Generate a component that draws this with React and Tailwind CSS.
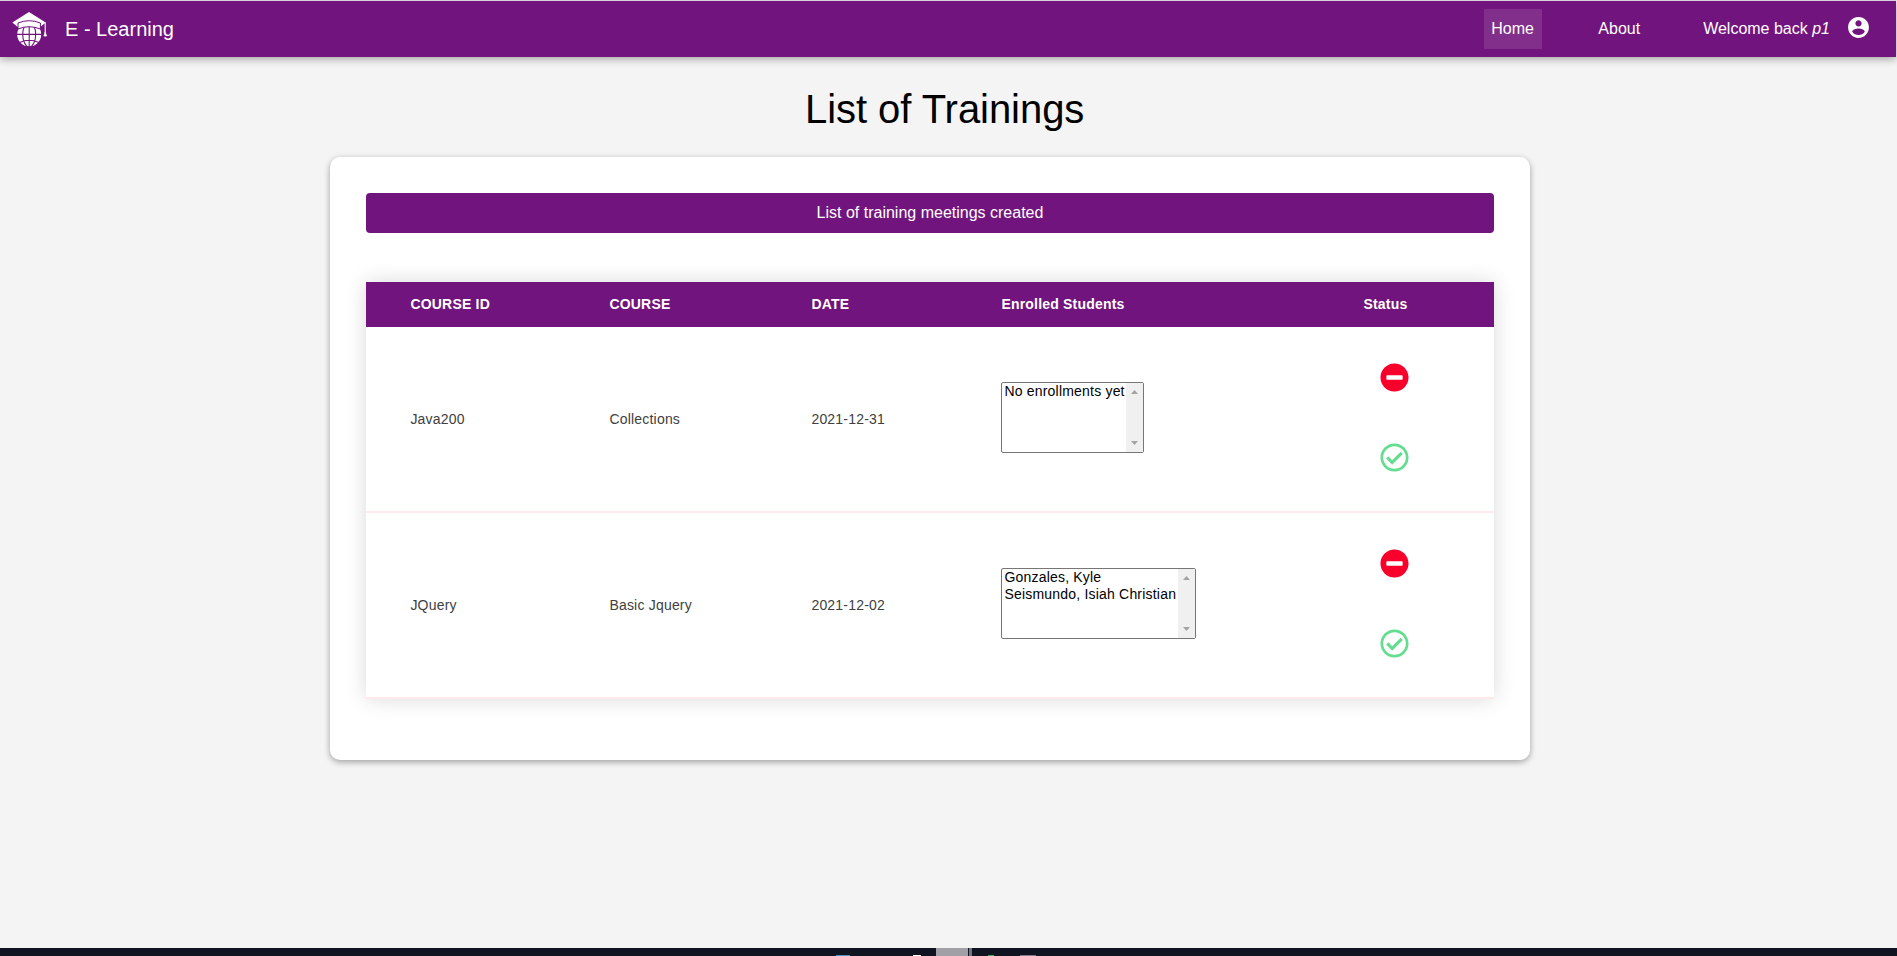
import React from "react";
import { FaMinusCircle, FaRegCheckCircle } from "react-icons/fa";

const columns = "grid grid-cols-[199px_202px_190px_362px_1fr] pl-[44.4px]";

const trainings = [
  { id: "Java200", course: "Collections", date: "2021-12-31", students: ["No enrollments yet"], width: "w-[143px]" },
  { id: "JQuery", course: "Basic Jquery", date: "2021-12-02", students: ["Gonzales, Kyle", "Seismundo, Isiah Christian"], width: "w-[195px]" },
];

function Logo() {
  return (
    <svg className="h-[36px] w-[36px] shrink-0" viewBox="0 0 36 36" fill="none">
      <circle cx="18.2" cy="23.5" r="12" fill="#fff" />
      <g stroke="#71147d" strokeWidth="1.1">
        <path d="M18.2 11v25M5.5 23.4h26M8.5 31.5q9.7-4.5 19.4 0" />
        <ellipse cx="18.2" cy="23.5" rx="6.5" ry="12.5" />
      </g>
      <path d="M18 1L1.3 11.4l5.4 4.6q11.3-6 22.6 0l5.4-4.6z" fill="#fff" />
      <path d="M7 12q11.2-4.6 22.4 0v6q-11.2-4.6-22.4 0z" fill="#fff" stroke="#71147d" />
      <path d="M34.2 11.2v10.5" stroke="#fff" strokeWidth="1.1" />
      <path d="M34.2 21l1.3 4h-2.6z" fill="#fff" stroke="#fff" strokeWidth="0.8" />
    </svg>
  );
}

function AccountIcon() {
  return (
    <svg className="mb-[3px] ml-[16px] h-[25px] w-[25px]" viewBox="0 0 24 24" fill="#fff">
      <path d="M12 2C6.48 2 2 6.48 2 12s4.48 10 10 10 10-4.48 10-10S17.52 2 12 2zm0 3c1.66 0 3 1.34 3 3s-1.34 3-3 3-3-1.34-3-3 1.34-3 3-3zm0 14.2c-2.5 0-4.71-1.28-6-3.22.03-1.99 4-3.08 6-3.08 1.99 0 5.97 1.09 6 3.08-1.29 1.94-3.5 3.22-6 3.22z" />
    </svg>
  );
}

function StudentList({ students, width }) {
  return (
    <div className={`mb-[4px] flex h-[71px] rounded-[2px] border border-[#767676] bg-white ${width}`}>
      <ul className="flex-1 pl-[2px] text-[14px] leading-[17px] tracking-[0.2px] whitespace-nowrap text-black">
        {students.map((name) => (
          <li key={name}>{name}</li>
        ))}
      </ul>
      <div className="flex w-[17px] shrink-0 flex-col items-center justify-between bg-[#f0f0f0] py-[7px]">
        <svg className="h-[4px] w-[7px]" viewBox="0 0 7 4" fill="#a3a3a3"><path d="M0 4L3.5 0 7 4z" /></svg>
        <svg className="h-[4px] w-[7px]" viewBox="0 0 7 4" fill="#a3a3a3"><path d="M0 0h7L3.5 4z" /></svg>
      </div>
    </div>
  );
}

export default function App() {
  return (
    <div className="flex h-[956px] w-full flex-col overflow-hidden bg-[#f4f4f4] font-['Liberation_Sans',Arial,sans-serif] text-black">
      <header className="mr-px flex h-[57px] shrink-0 items-center border-t border-[#d7d3df] bg-[#71147d] pl-[11px] text-white shadow-[0_2px_8px_rgba(0,0,0,0.35)]">
        <Logo />
        <span className="ml-[18px] text-[20px] leading-[24px]">E - Learning</span>
        <nav className="ml-auto flex items-center pr-[25px] text-[16px] leading-[24px]">
          <a className="flex h-[40px] w-[58px] items-center bg-[#812f8b] pl-[7px]">Home</a>
          <a className="ml-[56px]">About</a>
          <span className="ml-[63px]">Welcome back <em>p1</em></span>
          <AccountIcon />
        </nav>
      </header>
      <main className="flex-1">
        <h1 className="mt-[28px] ml-[805px] text-[40px] leading-[48px] tracking-[-0.05px]">List of Trainings</h1>
        <section className="mt-[24px] ml-[330px] h-[603px] w-[1200px] rounded-[10px] bg-white px-[36px] pt-[36px] shadow-[0_2px_6px_rgba(0,0,0,0.35)]">
          <div className="h-[40px] rounded-[4px] bg-[#71147d] text-center text-[16px] leading-[40px] text-white">List of training meetings created</div>
          <div className="mt-[49px] shadow-[0_0_20px_rgba(0,0,0,0.15)]">
            <div className={`${columns} h-[45px] items-center bg-[#71147d] text-[14px] font-bold tracking-[0.2px] text-white`}>
              <span>COURSE ID</span>
              <span>COURSE</span>
              <span>DATE</span>
              <span>Enrolled Students</span>
              <span>Status</span>
            </div>
            {trainings.map((row) => (
              <div key={row.id} className={`${columns} h-[186px] items-center border-b-2 border-[#ffe9ea] bg-white text-[14px] tracking-[0.2px] text-[#404040]`}>
                <span>{row.id}</span>
                <span>{row.course}</span>
                <span>{row.date}</span>
                <StudentList students={row.students} width={row.width} />
                <div className="mb-[4px] ml-[16.6px] flex flex-col gap-[51px]">
                  <FaMinusCircle className="h-[29px] w-[29px] text-[#f8002b]" />
                  <FaRegCheckCircle className="h-[29px] w-[29px] text-[#64dd90]" />
                </div>
              </div>
            ))}
          </div>
        </section>
      </main>
      <footer className="flex h-[8px] shrink-0 bg-[#101421]">
        <div className="flex w-[936px] items-end">
          <i className="ml-[836px] h-px w-[14px] bg-[#4d92c8]" />
          <i className="ml-[63px] h-px w-[8px] bg-white" />
        </div>
        <div className="w-[32px] bg-[#a0a0a6]" />
        <div className="ml-px w-[3px] bg-[#73747f]" />
        <div className="flex items-end">
          <i className="ml-[16px] h-px w-[6px] bg-[#37ad60]" />
          <i className="ml-[26px] h-px w-[16px] bg-[#85788c]" />
        </div>
      </footer>
    </div>
  );
}
